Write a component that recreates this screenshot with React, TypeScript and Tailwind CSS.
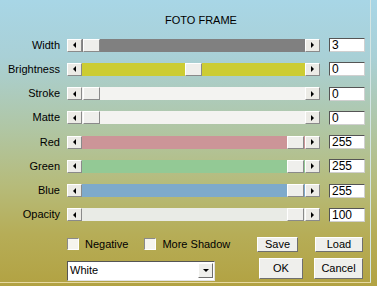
import React from "react";

const font = { fontFamily: '"Liberation Sans", Arial, sans-serif' };

function ArrowBtn({ dir }: { dir: "l" | "r" }) {
  return (
    <div className="w-[15px] h-[13px] shrink-0 bg-[#ecebe6] border-t border-l border-white border-r border-b border-r-[#8a8a8a] border-b-[#8a8a8a] flex items-center justify-center">
      {dir === "l" ? (
        <div className="w-0 h-0 border-t-[3px] border-b-[3px] border-r-[3px] border-t-transparent border-b-transparent border-r-black" />
      ) : (
        <div className="w-0 h-0 border-t-[3px] border-b-[3px] border-l-[3px] border-t-transparent border-b-transparent border-l-black" />
      )}
    </div>
  );
}

type Row = { label: string; value: string; track: string; thumb: number };

const rows: Row[] = [
  { label: "Width", value: "3", track: "bg-[#808080]", thumb: 0 },
  { label: "Brightness", value: "0", track: "bg-[#cccc33]", thumb: 102 },
  { label: "Stroke", value: "0", track: "bg-[#f3f3f1]", thumb: 0 },
  { label: "Matte", value: "0", track: "bg-[#f3f3f1]", thumb: 0 },
  { label: "Red", value: "255", track: "bg-[#cc9598]", thumb: 204 },
  { label: "Green", value: "255", track: "bg-[#93c995]", thumb: 204 },
  { label: "Blue", value: "255", track: "bg-[#7eaacb]", thumb: 204 },
  { label: "Opacity", value: "100", track: "bg-[#e9ebe6]", thumb: 204 },
];

function Slider({ row }: { row: Row }) {
  return (
    <div className="flex items-center h-[14px]">
      <div className="w-[60px] text-right text-[11px] leading-[13px] text-black">{row.label}</div>
      <div className="ml-[7px] flex items-center">
        <ArrowBtn dir="l" />
        <div className={`relative w-[223px] h-[13px] ${row.track}`}>
          <div
            className="absolute top-0 w-[17px] h-[13px] bg-[#efefec] border-t border-l border-white border-r border-b border-r-[#8a8a8a] border-b-[#8a8a8a]"
            style={{ left: row.thumb + 1 }}
          />
        </div>
        <ArrowBtn dir="r" />
      </div>
      <div className="ml-[9px] w-[36px] h-[14px] bg-white border-t border-l border-t-[#555] border-l-[#555] border-r border-b border-r-[#d0d0d0] border-b-[#d0d0d0] text-[12px] leading-[12px] pl-[2px] text-black">
        {row.value}
      </div>
    </div>
  );
}

function Check({ label }: { label: string }) {
  return (
    <div className="flex items-center">
      <div className="w-[12px] h-[12px] bg-[#f6f5ee] border-t border-l border-t-[#8a8a8a] border-l-[#8a8a8a] border-r border-b border-r-white border-b-white" />
      <span className="ml-[6px] text-[11px] leading-[13px] text-black">{label}</span>
    </div>
  );
}

function Btn({ label, w, h }: { label: string; w: string; h: string }) {
  return (
    <div
      className={`${w} ${h} bg-[#efefec] border-t border-l border-white border-r border-b border-r-[#6f6f6f] border-b-[#6f6f6f] flex items-center justify-center text-[11px] leading-[13px] text-black`}
    >
      {label}
    </div>
  );
}

export default function App() {
  return (
    <div
      className="w-[377px] h-[286px] overflow-hidden flex bg-[linear-gradient(to_bottom,#a8d6e6_0%,#a9d0d6_20%,#b0c6a4_45%,#b6bb7a_65%,#b6ad57_82%,#b2a242_100%)]"
      style={font}
    >
      <div className="w-[371px] h-[283px] shrink-0 border-r border-b border-r-[#d4e6e4] border-b-[#e6d9a0] flex flex-col">
        <div className="pt-[14px] pl-[165px] text-[11px] leading-[13px] text-black">FOTO FRAME</div>
        <div className="mt-[11px] flex flex-col gap-[10.25px]">
          {rows.map((r) => (
            <Slider key={r.label} row={r} />
          ))}
        </div>
        <div className="mt-[15px] flex items-center h-[15px]">
          <div className="pl-[67px] w-[257px] flex items-center">
            <Check label="Negative" />
            <div className="ml-[16px]">
              <Check label="More Shadow" />
            </div>
          </div>
          <Btn label="Save" w="w-[41px]" h="h-[15px]" />
          <div className="ml-[17px]">
            <Btn label="Load" w="w-[48px]" h="h-[15px]" />
          </div>
        </div>
        <div className="mt-[6px] flex items-start">
          <div className="ml-[67px] mt-[3px] w-[148px] h-[20px] bg-white border-t border-l border-t-[#555] border-l-[#555] border-r border-b border-r-[#e0e0e0] border-b-[#e0e0e0] flex items-center">
            <span className="pl-[2px] flex-1 text-[11px] leading-[13px] text-black">White</span>
            <div className="mr-[1px] w-[15px] h-[15px] bg-[#efefec] border-t border-l border-white border-r border-b border-r-[#6f6f6f] border-b-[#6f6f6f] flex items-center justify-center">
              <div className="w-0 h-0 border-l-[3px] border-r-[3px] border-t-[3px] border-l-transparent border-r-transparent border-t-black" />
            </div>
          </div>
          <div className="ml-[44px]">
            <Btn label="OK" w="w-[44px]" h="h-[21px]" />
          </div>
          <div className="ml-[11px]">
            <Btn label="Cancel" w="w-[49px]" h="h-[21px]" />
          </div>
        </div>
      </div>
    </div>
  );
}
